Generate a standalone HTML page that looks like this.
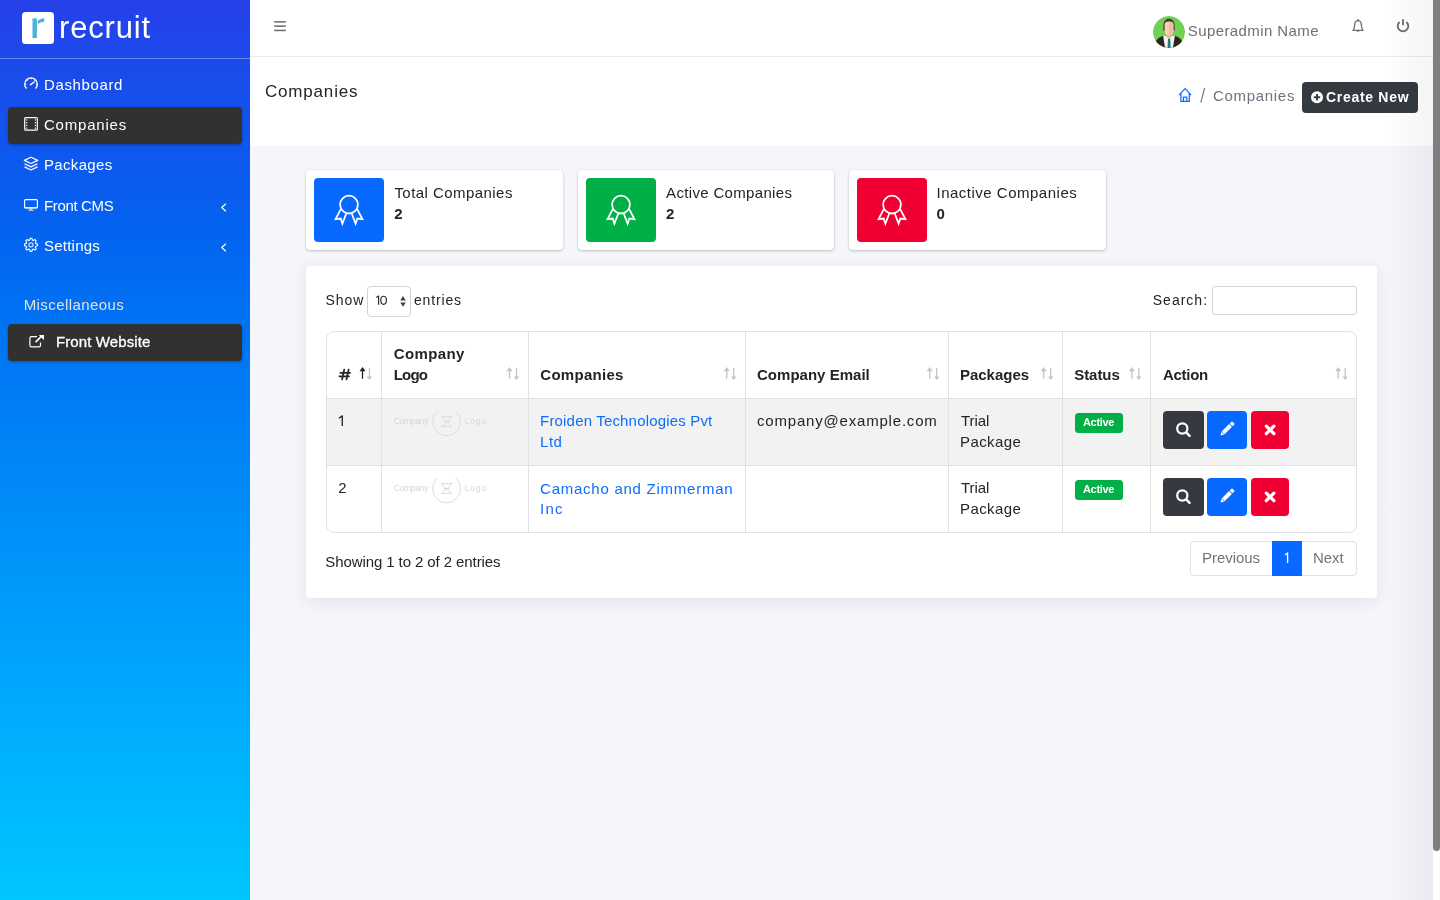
<!DOCTYPE html>
<html><head><meta charset="utf-8">
<style>
*{box-sizing:border-box;margin:0;padding:0}
html,body{width:1440px;height:900px;overflow:hidden}
body{font-family:"Liberation Sans",sans-serif;background:#f4f6fa;position:relative;color:#212529}
.a{position:absolute}
.t{position:absolute;white-space:nowrap}
#sb{left:0;top:0;width:250px;height:900px;background:linear-gradient(to bottom,#2640e8 0px,#1e48eb 49px,#1a4ceb 75px,#0e58ee 155px,#0462f0 225px,#0070f4 305px,#0084f6 450px,#00a6fd 675px,#00c6ff 900px)}
.act{left:8px;width:234px;height:37px;background:#313131;border-radius:4px;box-shadow:0 1px 3px rgba(0,0,0,.3)}
.card{background:#fff;border-radius:4px;box-shadow:0 0 1px rgba(0,0,0,.13),0 1px 3px rgba(0,0,0,.2)}
.btn{border-radius:4px}
</style></head><body>
<div id="sb" class="a"></div>
<div class="a" style="left:0;top:58px;width:250px;height:1px;background:rgba(255,255,255,.35)"></div>
<div class="a act" style="top:107px"></div>
<div class="a act" style="top:324px"></div>

<div class="a" style="left:250px;top:0;width:1183px;height:57px;background:#fff;border-bottom:1px solid #e9edf2"></div>
<div class="a" style="left:250px;top:57px;width:1183px;height:89px;background:#fff"></div>

<div class="a card" style="left:306px;top:170px;width:257px;height:80px"></div>
<div class="a card" style="left:578px;top:170px;width:256px;height:80px"></div>
<div class="a card" style="left:849px;top:170px;width:257px;height:80px"></div>
<div class="a" style="left:314px;top:178px;width:70px;height:64px;background:#0769ff;border-radius:4px"></div>
<div class="a" style="left:586px;top:178px;width:70px;height:64px;background:#00b046;border-radius:4px"></div>
<div class="a" style="left:857px;top:178px;width:70px;height:64px;background:#f00032;border-radius:4px"></div>

<div class="a" style="left:306px;top:266px;width:1071px;height:332px;background:#fff;border-radius:4px;box-shadow:0 3px 16px rgba(30,30,60,.09)"></div>
<div class="a" style="left:367px;top:286px;width:44px;height:31px;border:1px solid #ced4da;border-radius:4px;background:#fff"></div>
<div class="a" style="left:1212px;top:286px;width:145px;height:29px;border:1px solid #ced4da;border-radius:3px;background:#fff"></div>

<!-- table -->
<div class="a" style="left:327px;top:399px;width:1029px;height:66px;background:#f2f2f2"></div>
<div class="a" style="left:326px;top:331px;width:1031px;height:202px;border:1px solid #dee2e6;border-radius:8px"></div>
<div class="a" style="left:327px;top:398px;width:1029px;height:1px;background:#dee2e6"></div>
<div class="a" style="left:327px;top:465px;width:1029px;height:1px;background:#dee2e6"></div>
<div class="a" style="left:381px;top:332px;width:1px;height:200px;background:#dee2e6"></div>
<div class="a" style="left:528px;top:332px;width:1px;height:200px;background:#dee2e6"></div>
<div class="a" style="left:745px;top:332px;width:1px;height:200px;background:#dee2e6"></div>
<div class="a" style="left:948px;top:332px;width:1px;height:200px;background:#dee2e6"></div>
<div class="a" style="left:1062px;top:332px;width:1px;height:200px;background:#dee2e6"></div>
<div class="a" style="left:1150px;top:332px;width:1px;height:200px;background:#dee2e6"></div>

<div class="a" style="left:1075px;top:413px;width:48px;height:20px;background:#00b046;border-radius:3.5px"></div>
<div class="a" style="left:1075px;top:480px;width:48px;height:20px;background:#00b046;border-radius:3.5px"></div>
<div class="a btn" style="left:1163px;top:411px;width:41px;height:38px;background:#343a40"></div>
<div class="a btn" style="left:1207px;top:411px;width:40px;height:38px;background:#0769ff"></div>
<div class="a btn" style="left:1251px;top:411px;width:38px;height:38px;background:#f00032"></div>
<div class="a btn" style="left:1163px;top:478px;width:41px;height:38px;background:#343a40"></div>
<div class="a btn" style="left:1207px;top:478px;width:40px;height:38px;background:#0769ff"></div>
<div class="a btn" style="left:1251px;top:478px;width:38px;height:38px;background:#f00032"></div>

<div class="a" style="left:1190px;top:541px;width:167px;height:35px;border:1px solid #dee2e6;border-radius:4px"></div>
<div class="a" style="left:1272px;top:541px;width:30px;height:35px;background:#0769ff"></div>

<div class="a btn" style="left:1302px;top:82px;width:116px;height:31px;background:#343a40"></div>

<div class="a" style="left:1385px;top:0;width:48px;height:900px;background:linear-gradient(to right,rgba(0,0,40,0),rgba(0,0,40,.045))"></div>
<div class="a" style="left:1433px;top:0;width:7px;height:900px;background:#fff"></div>
<div class="a" style="left:1433px;top:0;width:7px;height:851px;background:#7f7f7f;border-radius:0 0 3.5px 3.5px"></div>

<svg class="a" style="left:0;top:0" width="1440" height="900" viewBox="0 0 1440 900">
<rect x="22" y="12" width="32" height="32" rx="3.5" fill="#fff"/>
<path d="M32.5,19.2 Q32.5,18.2 33.5,18.2 H35.9 Q36.9,18.2 36.9,19.4 V38 H32.5Z" fill="#4ab2de"/>
<path d="M37.8,24 V21 Q39.5,18.6 44.2,18.2 V21.8 Q40,22.3 37.8,24Z" fill="#4ab2de"/>
<path d="M26.55,88.65 A6.3,6.3 0 1 1 35.45,88.65" fill="none" stroke="#fff" stroke-width="1.3"/>
<path d="M30.6,84.6 L34.2,82" stroke="#fff" stroke-width="1.5" stroke-linecap="round"/>
<path d="M24.70,84.20 L26.10,84.20" stroke="#fff" stroke-width="1.1"/>
<path d="M26.55,79.75 L27.54,80.74" stroke="#fff" stroke-width="1.1"/>
<path d="M31.00,77.90 L31.00,79.30" stroke="#fff" stroke-width="1.1"/>
<path d="M35.45,79.75 L34.46,80.74" stroke="#fff" stroke-width="1.1"/>
<path d="M37.30,84.20 L35.90,84.20" stroke="#fff" stroke-width="1.1"/>
<rect x="24.7" y="117.6" width="12.6" height="12.6" rx="1" fill="none" stroke="#fff" stroke-width="1.2"/>
<rect x="26.1" y="119.30000000000001" width="1.2" height="1.2" fill="#fff"/><rect x="34.8" y="119.30000000000001" width="1.2" height="1.2" fill="#fff"/>
<rect x="26.1" y="122.10000000000001" width="1.2" height="1.2" fill="#fff"/><rect x="34.8" y="122.10000000000001" width="1.2" height="1.2" fill="#fff"/>
<rect x="26.1" y="124.9" width="1.2" height="1.2" fill="#fff"/><rect x="34.8" y="124.9" width="1.2" height="1.2" fill="#fff"/>
<rect x="26.1" y="127.6" width="1.2" height="1.2" fill="#fff"/><rect x="34.8" y="127.6" width="1.2" height="1.2" fill="#fff"/>
<path d="M24.3,160.4 L31,157.3 L37.7,160.4 L31,163.5Z M24.5,163.8 L31,166.9 L37.5,163.8 M24.5,166.9 L31,170 L37.5,166.9" fill="none" stroke="#fff" stroke-width="1.2" stroke-linejoin="round"/>
<rect x="24.6" y="199.7" width="12.8" height="8.2" rx="1" fill="none" stroke="#fff" stroke-width="1.2"/>
<rect x="25" y="207.3" width="12" height="1.2" fill="rgba(255,255,255,.6)"/><rect x="30.3" y="208.3" width="1.4" height="1.6" fill="rgba(255,255,255,.8)"/><rect x="28.2" y="209.6" width="5.6" height="1.1" fill="rgba(255,255,255,.8)"/>
<path d="M35.68,243.36 L37.54,243.92 L37.54,245.68 L35.68,246.24 L35.33,247.09 L36.25,248.80 L35.00,250.05 L33.29,249.13 L32.44,249.48 L31.88,251.34 L30.12,251.34 L29.56,249.48 L28.71,249.13 L27.00,250.05 L25.75,248.80 L26.67,247.09 L26.32,246.24 L24.46,245.68 L24.46,243.92 L26.32,243.36 L26.67,242.51 L25.75,240.80 L27.00,239.55 L28.71,240.47 L29.56,240.12 L30.12,238.26 L31.88,238.26 L32.44,240.12 L33.29,240.47 L35.00,239.55 L36.25,240.80 L35.33,242.51Z" fill="none" stroke="#fff" stroke-width="1.1" stroke-linejoin="round"/>
<circle cx="31" cy="244.8" r="2.1" fill="none" stroke="rgba(255,255,255,.85)" stroke-width="1.1"/>
<path d="M225.8,203.8 L221.8,207.5 L225.8,211.2" fill="none" stroke="#fff" stroke-width="1.2"/>
<path d="M225.8,243.8 L221.8,247.5 L225.8,251.2" fill="none" stroke="#fff" stroke-width="1.2"/>
<path d="M37,336.6 H31.5 Q29.9,336.6 29.9,338.2 V345.2 Q29.9,346.8 31.5,346.8 H38.9 Q40.5,346.8 40.5,345.2 V342.4" fill="none" stroke="#fff" stroke-width="1.2"/>
<path d="M35.6,342.2 L41.6,336.2" stroke="#fff" stroke-width="1.7"/><path d="M38.8,334.9 H44 V340.1Z" fill="#fff"/>
<rect x="274.2" y="21.1" width="11.6" height="1.5" fill="#6b6b6b"/>
<rect x="274.2" y="25.4" width="11.6" height="1.5" fill="#6b6b6b"/>
<rect x="274.2" y="29.7" width="11.6" height="1.5" fill="#6b6b6b"/>
<defs><clipPath id="av"><circle cx="1169" cy="32" r="16"/></clipPath></defs>
<g clip-path="url(#av)"><circle cx="1169" cy="32" r="16" fill="#72d055"/><path d="M1163.2,30.5 Q1162.6,18.4 1169,18.4 Q1175.4,18.4 1174.8,30.5Z" fill="#463c37"/><path d="M1155,50 V43.5 Q1156.5,37.6 1163,36 H1175 Q1181.5,37.6 1183,43.5 V50Z" fill="#2f2520"/><path d="M1163.2,36 H1174.8 L1172.6,50 H1165.4Z" fill="#f4f4f4"/><path d="M1166.6,33 H1171.4 V37.6 L1169,39 L1166.6,37.6Z" fill="#eab79c"/><path d="M1164.6,24.5 Q1164.6,21.6 1169,21.6 Q1173.4,21.6 1173.4,24.5 V31 Q1173.4,35.4 1169,35.4 Q1164.6,35.4 1164.6,31Z" fill="#f8cfb3"/><path d="M1169,21.6 Q1173.4,21.6 1173.4,24.5 V31 Q1173.4,35.4 1169,35.4Z" fill="#ecbfa6"/><path d="M1168,38.7 H1170.2 L1170.8,50 H1167.4Z" fill="#12807c"/></g>
<path d="M1353,30.3 Q1354.6,28.4 1354.6,25 Q1354.6,20.8 1358,20.6 Q1361.4,20.8 1361.4,25 Q1361.4,28.4 1363,30.3Z" fill="none" stroke="#6b6b6b" stroke-width="1.3" stroke-linejoin="round"/>
<path d="M1356.6,31.2 Q1358,33.4 1359.4,31.2Z" fill="#6b6b6b"/><circle cx="1358" cy="19.8" r="0.8" fill="#6b6b6b"/>
<path d="M1399.6,22 A5.3,5.3 0 1 0 1406.4,22" fill="none" stroke="#6b6b6b" stroke-width="1.8"/>
<path d="M1403,19.2 V25.3" stroke="#6b6b6b" stroke-width="1.8"/>
<path d="M1200.8,102.6 L1204.6,88" stroke="#6c757d" stroke-width="1.1"/>
<path d="M1179,95.2 L1185.1,88.6 L1191.2,95.2 M1180.9,93.4 V101.3 H1189.3 V93.4 M1183.4,101.3 V97.2 H1186.8 V101.3" fill="none" stroke="#0d6efd" stroke-width="1.25" stroke-linejoin="miter"/>
<circle cx="1317" cy="97.2" r="6" fill="#fff"/><rect x="1313.8" y="96.3" width="6.4" height="1.9" fill="#343a40"/><rect x="1316.05" y="94" width="1.9" height="6.4" fill="#343a40"/>
<circle cx="349" cy="204.6" r="8.9" fill="none" stroke="#fff" stroke-width="1.8"/>
<path d="M340.80,209.20 L335.60,219.2 L340.70,218.6 L342.40,223.6 L346.10,214.00" fill="none" stroke="#fff" stroke-width="1.8" stroke-linejoin="miter"/>
<path d="M357.20,209.20 L362.40,219.2 L357.30,218.6 L355.60,223.6 L351.90,214.00" fill="none" stroke="#fff" stroke-width="1.8" stroke-linejoin="miter"/>
<circle cx="621" cy="204.6" r="8.9" fill="none" stroke="#fff" stroke-width="1.8"/>
<path d="M612.80,209.20 L607.60,219.2 L612.70,218.6 L614.40,223.6 L618.10,214.00" fill="none" stroke="#fff" stroke-width="1.8" stroke-linejoin="miter"/>
<path d="M629.20,209.20 L634.40,219.2 L629.30,218.6 L627.60,223.6 L623.90,214.00" fill="none" stroke="#fff" stroke-width="1.8" stroke-linejoin="miter"/>
<circle cx="892" cy="204.6" r="8.9" fill="none" stroke="#fff" stroke-width="1.8"/>
<path d="M883.80,209.20 L878.60,219.2 L883.70,218.6 L885.40,223.6 L889.10,214.00" fill="none" stroke="#fff" stroke-width="1.8" stroke-linejoin="miter"/>
<path d="M900.20,209.20 L905.40,219.2 L900.30,218.6 L898.60,223.6 L894.90,214.00" fill="none" stroke="#fff" stroke-width="1.8" stroke-linejoin="miter"/>
<path d="M362.5,368.5 V378.8" stroke="#212529" stroke-width="1.3"/><path d="M359.5,371.2 L362.5,367 L365.5,371.2Z" fill="#212529"/><path d="M369.5,368 V377.5" stroke="#c2c4c6" stroke-width="1.3"/><path d="M366.8,376.4 L369.5,380 L372.2,376.4Z" fill="#c2c4c6"/>
<path d="M509.5,368.5 V378.8" stroke="#c2c4c6" stroke-width="1.3"/><path d="M506.5,371.2 L509.5,367 L512.5,371.2Z" fill="#c2c4c6"/><path d="M516.5,368 V377.5" stroke="#c2c4c6" stroke-width="1.3"/><path d="M513.8,376.4 L516.5,380 L519.2,376.4Z" fill="#c2c4c6"/>
<path d="M726.7,368.5 V378.8" stroke="#c2c4c6" stroke-width="1.3"/><path d="M723.7,371.2 L726.7,367 L729.7,371.2Z" fill="#c2c4c6"/><path d="M733.7,368 V377.5" stroke="#c2c4c6" stroke-width="1.3"/><path d="M731.0,376.4 L733.7,380 L736.4000000000001,376.4Z" fill="#c2c4c6"/>
<path d="M929.7,368.5 V378.8" stroke="#c2c4c6" stroke-width="1.3"/><path d="M926.7,371.2 L929.7,367 L932.7,371.2Z" fill="#c2c4c6"/><path d="M936.7,368 V377.5" stroke="#c2c4c6" stroke-width="1.3"/><path d="M934.0,376.4 L936.7,380 L939.4000000000001,376.4Z" fill="#c2c4c6"/>
<path d="M1043.7,368.5 V378.8" stroke="#c2c4c6" stroke-width="1.3"/><path d="M1040.7,371.2 L1043.7,367 L1046.7,371.2Z" fill="#c2c4c6"/><path d="M1050.7,368 V377.5" stroke="#c2c4c6" stroke-width="1.3"/><path d="M1048.0,376.4 L1050.7,380 L1053.4,376.4Z" fill="#c2c4c6"/>
<path d="M1131.8,368.5 V378.8" stroke="#c2c4c6" stroke-width="1.3"/><path d="M1128.8,371.2 L1131.8,367 L1134.8,371.2Z" fill="#c2c4c6"/><path d="M1138.8,368 V377.5" stroke="#c2c4c6" stroke-width="1.3"/><path d="M1136.1,376.4 L1138.8,380 L1141.5,376.4Z" fill="#c2c4c6"/>
<path d="M1338.2,368.5 V378.8" stroke="#c2c4c6" stroke-width="1.3"/><path d="M1335.2,371.2 L1338.2,367 L1341.2,371.2Z" fill="#c2c4c6"/><path d="M1345.2,368 V377.5" stroke="#c2c4c6" stroke-width="1.3"/><path d="M1342.5,376.4 L1345.2,380 L1347.9,376.4Z" fill="#c2c4c6"/>
<path d="M400.3,300.4 L403,296.1 L405.7,300.4Z M400.3,302.5 L405.7,302.5 L403,306.8Z" fill="#3a4047"/>
<circle cx="1182.3" cy="428.5" r="5.1" fill="none" stroke="#fff" stroke-width="2.2"/>
<path d="M1186.2,432.4 L1189.6,435.8" stroke="#fff" stroke-width="2.4" stroke-linecap="round"/>
<g transform="translate(1220.6,435.4) rotate(-45)"><path d="M0,0 L3.2,-1.95 L3.2,1.95Z" fill="#fff"/><rect x="3.6" y="-1.95" width="10.4" height="3.9" fill="#fff"/><rect x="14.8" y="-1.95" width="3.3" height="3.9" rx="0.7" fill="#fff"/></g>
<path d="M1266.3,426.1 L1273.9,433.7 M1273.9,426.1 L1266.3,433.7" stroke="#fff" stroke-width="3.2" stroke-linecap="round"/>
<circle cx="1182.3" cy="495.5" r="5.1" fill="none" stroke="#fff" stroke-width="2.2"/>
<path d="M1186.2,499.4 L1189.6,502.8" stroke="#fff" stroke-width="2.4" stroke-linecap="round"/>
<g transform="translate(1220.6,502.4) rotate(-45)"><path d="M0,0 L3.2,-1.95 L3.2,1.95Z" fill="#fff"/><rect x="3.6" y="-1.95" width="10.4" height="3.9" fill="#fff"/><rect x="14.8" y="-1.95" width="3.3" height="3.9" rx="0.7" fill="#fff"/></g>
<path d="M1266.3,493.1 L1273.9,500.7 M1273.9,493.1 L1266.3,500.7" stroke="#fff" stroke-width="3.2" stroke-linecap="round"/>
<path d="M455.53,411.25 A13.9,13.9 0 1 1 437.67,411.25" fill="none" stroke="#dcdcdc" stroke-width="1"/><path d="M441.5,415.6 C442,420 451,424 451.8,427.4 M451.8,415.6 C451.3,420 442.3,424 441.5,427.4 M442.3,416.6 H451 M443.6,421.5 H449.7 M442.3,426.4 H451" fill="none" stroke="#dcdcdc" stroke-width="1"/>
<path d="M455.53,478.25 A13.9,13.9 0 1 1 437.67,478.25" fill="none" stroke="#dcdcdc" stroke-width="1"/><path d="M441.5,482.6 C442,487 451,491 451.8,494.4 M451.8,482.6 C451.3,487 442.3,491 441.5,494.4 M442.3,483.6 H451 M443.6,488.5 H449.7 M442.3,493.4 H451" fill="none" stroke="#dcdcdc" stroke-width="1"/>
<path d="M338.9,418.2 L342.3,415.9 V426" fill="none" stroke="#212529" stroke-width="1.35" stroke-linejoin="round"/>
<path d="M1285.1,555.1 L1287.6,553 V563" fill="none" stroke="#fff" stroke-width="1.35" stroke-linejoin="round"/>
<path d="M376.3,297.6 L378.6,296 V304.7" fill="none" stroke="#2b3035" stroke-width="1.2" stroke-linejoin="round"/>
<ellipse cx="383.6" cy="300.3" rx="2.8" ry="4.05" fill="none" stroke="#2b3035" stroke-width="1.2"/>
<path d="M344.2,369.6 L342.1,379.4 M348.6,369.6 L346.5,379.4 M340.4,372.9 H350 M339.4,376.3 H349" fill="none" stroke="#212529" stroke-width="1.75" stroke-linecap="round"/>
</svg>
<div id="tl" style="position:absolute;left:0;top:0;width:1440px;height:900px;will-change:transform">
<div class="t" style="left:59.00px;top:11.50px;font-size:31px;line-height:31px;font-weight:400;color:#ffffff;letter-spacing:0.833px;">recruit</div>
<div class="t" style="left:44.00px;top:77.00px;font-size:15px;line-height:15px;font-weight:400;color:#ffffff;letter-spacing:0.625px;">Dashboard</div>
<div class="t" style="left:44.00px;top:117.00px;font-size:15px;line-height:15px;font-weight:400;color:#ffffff;letter-spacing:0.787px;">Companies</div>
<div class="t" style="left:44.00px;top:157.00px;font-size:15px;line-height:15px;font-weight:400;color:#ffffff;letter-spacing:0.329px;">Packages</div>
<div class="t" style="left:44.00px;top:198.00px;font-size:15px;line-height:15px;font-weight:400;color:#ffffff;letter-spacing:-0.350px;">Front CMS</div>
<div class="t" style="left:44.00px;top:238.00px;font-size:15px;line-height:15px;font-weight:400;color:#ffffff;letter-spacing:0.229px;">Settings</div>
<div class="t" style="left:23.70px;top:297.20px;font-size:15px;line-height:15px;font-weight:400;color:#e6dfd5;letter-spacing:0.425px;">Miscellaneous</div>
<div class="t" style="left:56.00px;top:334.20px;font-size:15px;line-height:15px;font-weight:400;color:#ffffff;letter-spacing:0.100px;-webkit-text-stroke:0.3px #fff;">Front Website</div>
<div class="t" style="left:1187.75px;top:22.75px;font-size:15px;line-height:15px;font-weight:400;color:#6f6f6f;letter-spacing:0.411px;">Superadmin Name</div>
<div class="t" style="left:265.00px;top:83.00px;font-size:17px;line-height:17px;font-weight:400;color:#212529;letter-spacing:0.812px;">Companies</div>
<div class="t" style="left:1213.00px;top:87.80px;font-size:15px;line-height:15px;font-weight:400;color:#6c757d;letter-spacing:0.688px;">Companies</div>
<div class="t" style="left:1326.00px;top:89.80px;font-size:14px;line-height:14px;font-weight:700;color:#ffffff;letter-spacing:0.700px;">Create New</div>
<div class="t" style="left:394.40px;top:185.00px;font-size:15px;line-height:15px;font-weight:400;color:#212529;letter-spacing:0.450px;">Total Companies</div>
<div class="t" style="left:394.20px;top:205.80px;font-size:15px;line-height:15px;font-weight:700;color:#212529;letter-spacing:0.000px;">2</div>
<div class="t" style="left:666.10px;top:185.00px;font-size:15px;line-height:15px;font-weight:400;color:#212529;letter-spacing:0.327px;">Active Companies</div>
<div class="t" style="left:666.10px;top:205.80px;font-size:15px;line-height:15px;font-weight:700;color:#212529;letter-spacing:0.000px;">2</div>
<div class="t" style="left:936.50px;top:185.00px;font-size:15px;line-height:15px;font-weight:400;color:#212529;letter-spacing:0.500px;">Inactive Companies</div>
<div class="t" style="left:936.50px;top:205.80px;font-size:15px;line-height:15px;font-weight:700;color:#212529;letter-spacing:0.000px;">0</div>
<div class="t" style="left:325.40px;top:293.00px;font-size:14px;line-height:14px;font-weight:400;color:#212529;letter-spacing:0.967px;">Show</div>
<div class="t" style="left:414.00px;top:293.00px;font-size:14px;line-height:14px;font-weight:400;color:#212529;letter-spacing:0.833px;">entries</div>
<div class="t" style="left:1152.75px;top:293.40px;font-size:14px;line-height:14px;font-weight:400;color:#212529;letter-spacing:1.008px;">Search:</div>
<div class="t" style="left:393.70px;top:345.70px;font-size:15px;line-height:15px;font-weight:700;color:#212529;letter-spacing:0.383px;">Company</div>
<div class="t" style="left:393.70px;top:366.70px;font-size:15px;line-height:15px;font-weight:700;color:#212529;letter-spacing:-0.800px;">Logo</div>
<div class="t" style="left:540.30px;top:367.00px;font-size:15px;line-height:15px;font-weight:700;color:#212529;letter-spacing:0.275px;">Companies</div>
<div class="t" style="left:757.00px;top:367.00px;font-size:15px;line-height:15px;font-weight:700;color:#212529;letter-spacing:0.017px;">Company Email</div>
<div class="t" style="left:959.90px;top:367.00px;font-size:15px;line-height:15px;font-weight:700;color:#212529;letter-spacing:0.000px;">Packages</div>
<div class="t" style="left:1074.20px;top:367.00px;font-size:15px;line-height:15px;font-weight:700;color:#212529;letter-spacing:-0.040px;">Status</div>
<div class="t" style="left:1163.00px;top:367.00px;font-size:15px;line-height:15px;font-weight:700;color:#212529;letter-spacing:-0.300px;">Action</div>
<div class="t" style="left:540.10px;top:413.10px;font-size:15px;line-height:15px;font-weight:400;color:#0d6efd;letter-spacing:0.174px;">Froiden Technologies Pvt</div>
<div class="t" style="left:540.10px;top:434.00px;font-size:15px;line-height:15px;font-weight:400;color:#0d6efd;letter-spacing:0.450px;">Ltd</div>
<div class="t" style="left:757.00px;top:413.25px;font-size:15px;line-height:15px;font-weight:400;color:#212529;letter-spacing:0.806px;">company@example.com</div>
<div class="t" style="left:961.00px;top:413.25px;font-size:15px;line-height:15px;font-weight:400;color:#212529;letter-spacing:-0.062px;">Trial</div>
<div class="t" style="left:960.00px;top:434.00px;font-size:15px;line-height:15px;font-weight:400;color:#212529;letter-spacing:0.417px;">Package</div>
<div class="t" style="left:1083.00px;top:416.90px;font-size:11px;line-height:11px;font-weight:700;color:#ffffff;letter-spacing:-0.320px;">Active</div>
<div class="t" style="left:338.30px;top:479.90px;font-size:15px;line-height:15px;font-weight:400;color:#212529;letter-spacing:0.000px;">2</div>
<div class="t" style="left:540.10px;top:480.50px;font-size:15px;line-height:15px;font-weight:400;color:#0d6efd;letter-spacing:0.745px;">Camacho and Zimmerman</div>
<div class="t" style="left:540.10px;top:501.00px;font-size:15px;line-height:15px;font-weight:400;color:#0d6efd;letter-spacing:1.250px;">Inc</div>
<div class="t" style="left:961.00px;top:480.25px;font-size:15px;line-height:15px;font-weight:400;color:#212529;letter-spacing:-0.062px;">Trial</div>
<div class="t" style="left:960.00px;top:501.00px;font-size:15px;line-height:15px;font-weight:400;color:#212529;letter-spacing:0.417px;">Package</div>
<div class="t" style="left:1083.00px;top:483.90px;font-size:11px;line-height:11px;font-weight:700;color:#ffffff;letter-spacing:-0.320px;">Active</div>
<div class="t" style="left:325.25px;top:553.75px;font-size:15px;line-height:15px;font-weight:400;color:#212529;letter-spacing:-0.087px;">Showing 1 to 2 of 2 entries</div>
<div class="t" style="left:1202.00px;top:550.00px;font-size:15px;line-height:15px;font-weight:400;color:#6c757d;letter-spacing:-0.043px;">Previous</div>
<div class="t" style="left:1313.00px;top:550.00px;font-size:15px;line-height:15px;font-weight:400;color:#6c757d;letter-spacing:-0.067px;">Next</div>
<div class="t" style="left:393.80px;top:416.80px;font-size:8.5px;line-height:8.5px;font-weight:400;color:#d6d6d6;letter-spacing:-0.300px;">Company</div>
<div class="t" style="left:464.70px;top:416.80px;font-size:8.5px;line-height:8.5px;font-weight:400;color:#d6d6d6;letter-spacing:0.833px;">Logo</div>
<div class="t" style="left:393.80px;top:483.80px;font-size:8.5px;line-height:8.5px;font-weight:400;color:#d6d6d6;letter-spacing:-0.300px;">Company</div>
<div class="t" style="left:464.70px;top:483.80px;font-size:8.5px;line-height:8.5px;font-weight:400;color:#d6d6d6;letter-spacing:0.833px;">Logo</div>
</div>
</body></html>
